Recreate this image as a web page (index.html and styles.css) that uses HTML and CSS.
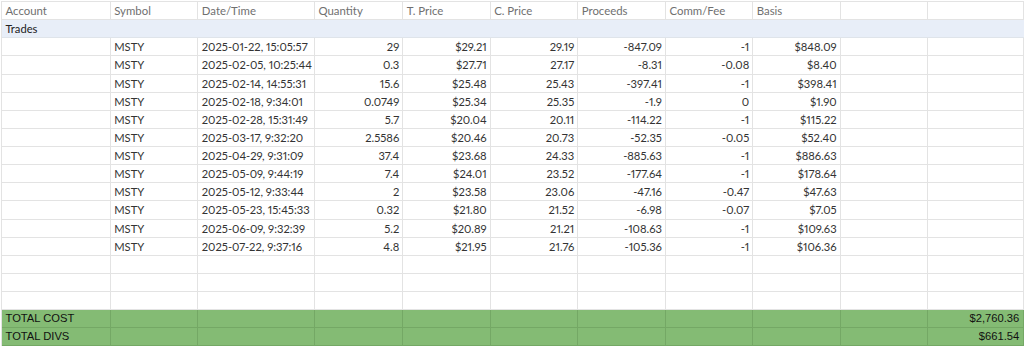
FILE: index.html
```html
<!DOCTYPE html>
<html>
<head>
<meta charset="utf-8">
<link rel="stylesheet" href="styles.css">
</head>
<body>
<div class="sheet">
  <div class="row head">
    <div class="c">Account</div><div class="c">Symbol</div><div class="c">Date/Time</div><div class="c">Quantity</div><div class="c">T. Price</div><div class="c">C. Price</div><div class="c">Proceeds</div><div class="c">Comm/Fee</div><div class="c">Basis</div><div class="c"></div><div class="c"></div>
  </div>
  <div class="row section"><div class="c span">Trades</div></div>

  <div class="row"><div class="c"></div><div class="c">MSTY</div><div class="c">2025-01-22, 15:05:57</div><div class="c r">29</div><div class="c r">$29.21</div><div class="c r">29.19</div><div class="c r">-847.09</div><div class="c r">-1</div><div class="c r">$848.09</div><div class="c"></div><div class="c"></div></div>
  <div class="row"><div class="c"></div><div class="c">MSTY</div><div class="c">2025-02-05, 10:25:44</div><div class="c r">0.3</div><div class="c r">$27.71</div><div class="c r">27.17</div><div class="c r">-8.31</div><div class="c r">-0.08</div><div class="c r">$8.40</div><div class="c"></div><div class="c"></div></div>
  <div class="row"><div class="c"></div><div class="c">MSTY</div><div class="c">2025-02-14, 14:55:31</div><div class="c r">15.6</div><div class="c r">$25.48</div><div class="c r">25.43</div><div class="c r">-397.41</div><div class="c r">-1</div><div class="c r">$398.41</div><div class="c"></div><div class="c"></div></div>
  <div class="row"><div class="c"></div><div class="c">MSTY</div><div class="c">2025-02-18, 9:34:01</div><div class="c r">0.0749</div><div class="c r">$25.34</div><div class="c r">25.35</div><div class="c r">-1.9</div><div class="c r">0</div><div class="c r">$1.90</div><div class="c"></div><div class="c"></div></div>
  <div class="row"><div class="c"></div><div class="c">MSTY</div><div class="c">2025-02-28, 15:31:49</div><div class="c r">5.7</div><div class="c r">$20.04</div><div class="c r">20.11</div><div class="c r">-114.22</div><div class="c r">-1</div><div class="c r">$115.22</div><div class="c"></div><div class="c"></div></div>
  <div class="row"><div class="c"></div><div class="c">MSTY</div><div class="c">2025-03-17, 9:32:20</div><div class="c r">2.5586</div><div class="c r">$20.46</div><div class="c r">20.73</div><div class="c r">-52.35</div><div class="c r">-0.05</div><div class="c r">$52.40</div><div class="c"></div><div class="c"></div></div>
  <div class="row"><div class="c"></div><div class="c">MSTY</div><div class="c">2025-04-29, 9:31:09</div><div class="c r">37.4</div><div class="c r">$23.68</div><div class="c r">24.33</div><div class="c r">-885.63</div><div class="c r">-1</div><div class="c r">$886.63</div><div class="c"></div><div class="c"></div></div>
  <div class="row"><div class="c"></div><div class="c">MSTY</div><div class="c">2025-05-09, 9:44:19</div><div class="c r">7.4</div><div class="c r">$24.01</div><div class="c r">23.52</div><div class="c r">-177.64</div><div class="c r">-1</div><div class="c r">$178.64</div><div class="c"></div><div class="c"></div></div>
  <div class="row"><div class="c"></div><div class="c">MSTY</div><div class="c">2025-05-12, 9:33:44</div><div class="c r">2</div><div class="c r">$23.58</div><div class="c r">23.06</div><div class="c r">-47.16</div><div class="c r">-0.47</div><div class="c r">$47.63</div><div class="c"></div><div class="c"></div></div>
  <div class="row"><div class="c"></div><div class="c">MSTY</div><div class="c">2025-05-23, 15:45:33</div><div class="c r">0.32</div><div class="c r">$21.80</div><div class="c r">21.52</div><div class="c r">-6.98</div><div class="c r">-0.07</div><div class="c r">$7.05</div><div class="c"></div><div class="c"></div></div>
  <div class="row"><div class="c"></div><div class="c">MSTY</div><div class="c">2025-06-09, 9:32:39</div><div class="c r">5.2</div><div class="c r">$20.89</div><div class="c r">21.21</div><div class="c r">-108.63</div><div class="c r">-1</div><div class="c r">$109.63</div><div class="c"></div><div class="c"></div></div>
  <div class="row"><div class="c"></div><div class="c">MSTY</div><div class="c">2025-07-22, 9:37:16</div><div class="c r">4.8</div><div class="c r">$21.95</div><div class="c r">21.76</div><div class="c r">-105.36</div><div class="c r">-1</div><div class="c r">$106.36</div><div class="c"></div><div class="c"></div></div>

  <div class="row"><div class="c"></div><div class="c"></div><div class="c"></div><div class="c"></div><div class="c"></div><div class="c"></div><div class="c"></div><div class="c"></div><div class="c"></div><div class="c"></div><div class="c"></div></div>
  <div class="row"><div class="c"></div><div class="c"></div><div class="c"></div><div class="c"></div><div class="c"></div><div class="c"></div><div class="c"></div><div class="c"></div><div class="c"></div><div class="c"></div><div class="c"></div></div>
  <div class="row"><div class="c"></div><div class="c"></div><div class="c"></div><div class="c"></div><div class="c"></div><div class="c"></div><div class="c"></div><div class="c"></div><div class="c"></div><div class="c"></div><div class="c"></div></div>

  <div class="row total"><div class="c">TOTAL COST</div><div class="c"></div><div class="c"></div><div class="c"></div><div class="c"></div><div class="c"></div><div class="c"></div><div class="c"></div><div class="c"></div><div class="c"></div><div class="c r">$2,760.36</div></div>
  <div class="row total"><div class="c">TOTAL DIVS</div><div class="c"></div><div class="c"></div><div class="c"></div><div class="c"></div><div class="c"></div><div class="c"></div><div class="c"></div><div class="c"></div><div class="c"></div><div class="c r">$661.54</div></div>
</div>
</body>
</html>
```

FILE: styles.css
```css
html, body {
  margin: 0;
  padding: 0;
  background: #ffffff;
}

.sheet {
  margin-top: 1px;
  margin-left: 1px;
  border-top: 1px solid #e3e3e3;
  border-left: 1px solid #e3e3e3;
  font-family: Lato, "Open Sans", sans-serif;
  font-size: 11.2px;
  color: #333333;
  font-variant-numeric: proportional-nums;
}

.row {
  display: grid;
  grid-template-columns: 108.7px 87.6px 116.7px 88.3px 87.4px 87.6px 87.7px 87.3px 87.4px 87.6px 96px;
  height: 18.14px;
}

.c {
  box-sizing: border-box;
  border-right: 1px solid #e3e3e3;
  border-bottom: 1px solid #e3e3e3;
  padding: 0 3px 0 3.5px;
  line-height: 17px;
  white-space: nowrap;
  overflow: hidden;
}

.r {
  text-align: right;
}

.head .c {
  color: #707070;
  font-size: 11.4px;
}

.section {
  background: #e8eef8;
}

.section .span {
  grid-column: 1 / -1;
  color: #222222;
  border-right: none;
  border-bottom-color: #dfe4ea;
}

.total {
  background: #84bb74;
}

.total .c {
  font-family: "Liberation Sans", Arial, sans-serif;
  font-size: 11.2px;
  font-variant-numeric: normal;
  color: #111111;
  border-right-color: #74a865;
  border-bottom-color: #74a865;
  padding-right: 4px;
}
```
